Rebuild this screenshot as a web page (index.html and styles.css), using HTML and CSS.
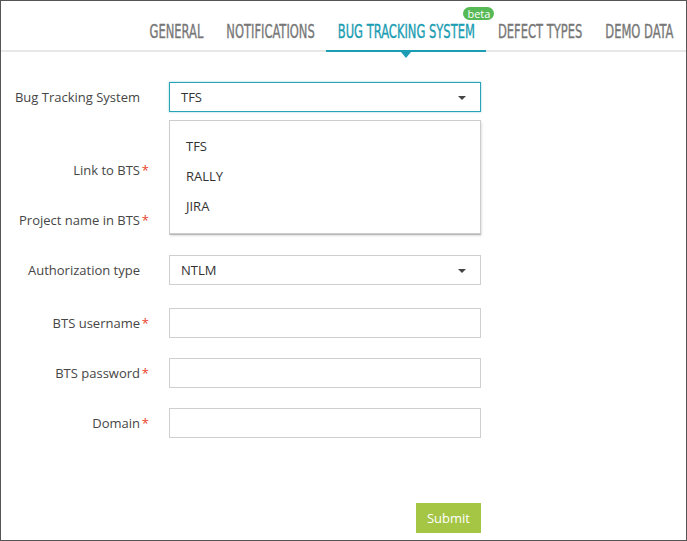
FILE: index.html
```html
<!DOCTYPE html>
<html>
<head>
<meta charset="utf-8">
<link rel="stylesheet" href="styles.css">
</head>
<body>
<div class="frame">
  <nav class="tabs">
    <a class="tab"><span class="tab-text">GENERAL</span></a>
    <a class="tab"><span class="tab-text">NOTIFICATIONS</span></a>
    <a class="tab active"><span class="tab-text">BUG TRACKING SYSTEM</span><span class="badge">beta</span></a>
    <a class="tab"><span class="tab-text">DEFECT TYPES</span></a>
    <a class="tab"><span class="tab-text">DEMO DATA</span></a>
  </nav>

  <form class="form">
    <div class="row first">
      <label class="label">Bug Tracking System<span class="star"></span></label>
      <div class="field">
        <div class="select focused"><span>TFS</span><i class="caret"></i></div>
        <ul class="menu">
          <li>TFS</li>
          <li>RALLY</li>
          <li>JIRA</li>
        </ul>
      </div>
    </div>
    <div class="row second">
      <label class="label">Link to BTS<span class="star">*</span></label>
      <div class="field"><div class="input"></div></div>
    </div>
    <div class="row">
      <label class="label">Project name in BTS<span class="star">*</span></label>
      <div class="field"><div class="input"></div></div>
    </div>
    <div class="row">
      <label class="label">Authorization type<span class="star"></span></label>
      <div class="field"><div class="select"><span>NTLM</span><i class="caret"></i></div></div>
    </div>
    <div class="row fifth">
      <label class="label">BTS username<span class="star">*</span></label>
      <div class="field"><div class="input"></div></div>
    </div>
    <div class="row">
      <label class="label">BTS password<span class="star">*</span></label>
      <div class="field"><div class="input"></div></div>
    </div>
    <div class="row">
      <label class="label">Domain<span class="star">*</span></label>
      <div class="field"><div class="input"></div></div>
    </div>
    <div class="actions">
      <button type="button" class="submit">Submit</button>
    </div>
  </form>
</div>
</body>
</html>
```

FILE: styles.css
```css
* { box-sizing: border-box; }
html, body { margin: 0; padding: 0; background: #fff; }
body { font-family: "Open Sans", "Liberation Sans", sans-serif; font-size: 13px; color: #444; }

.frame {
  width: 687px;
  height: 541px;
  border: 1px solid #555;
  overflow: hidden;
}

.tabs {
  display: flex;
  justify-content: flex-end;
  height: 51px;
  border-bottom: 2px solid #e8e8e8;
  padding-right: 1px;
}
.tab {
  position: relative;
  display: flex;
  align-items: flex-end;
  padding: 0 11.5px 7px;
  margin-bottom: -2px;
  border-bottom: 2px solid transparent;
  color: #777;
  font-family: "Liberation Sans Narrow", "DejaVu Sans Condensed", "Liberation Sans", sans-serif;
  font-size: 12.8px;
  line-height: 14px;
  -webkit-text-stroke: 0.25px currentColor;
}
.tab-text {
  display: inline-block;
  transform: scaleY(1.55);
  transform-origin: 50% 100%;
  white-space: nowrap;
}
.tab.active { color: #1b9db3; border-bottom-color: #1b9db3; }
.tab.active::after {
  content: "";
  position: absolute;
  left: 50%;
  bottom: -8px;
  margin-left: -5px;
  border-left: 5px solid transparent;
  border-right: 5px solid transparent;
  border-top: 6px solid #1b9db3;
}
.badge {
  position: absolute;
  top: 6px;
  right: -8px;
  height: 13px;
  padding: 0 4px;
  border-radius: 7px;
  background: #56b955;
  color: #fff;
  font-family: "Open Sans", sans-serif;
  font-size: 11px;
  line-height: 13px;
  -webkit-text-stroke: 0;
}

.form { padding: 0; margin: 0; }
.row {
  display: grid;
  grid-template-columns: 148px 312px;
  column-gap: 20px;
  align-items: center;
  height: 30px;
  margin-top: 20px;
}
.row.first { margin-top: 30px; }
.row.second { margin-top: 43px; }
.row.fifth { margin-top: 23px; }

.label {
  display: flex;
  justify-content: flex-end;
  white-space: nowrap;
  color: #464646;
}
.star { display: inline-block; width: 9px; text-align: right; color: #e8432c; }

.field { position: relative; height: 30px; }
.input, .select {
  height: 30px;
  border: 1px solid #cfcfcf;
  background: #fff;
}
.select {
  display: flex;
  align-items: center;
  justify-content: space-between;
  padding: 0 14px 0 11px;
  color: #333;
}
.select.focused {
  border-color: #2aa3b6;
  box-shadow: 0 0 2px rgba(42, 163, 182, 0.5);
}
.caret {
  width: 0; height: 0;
  border-left: 4px solid transparent;
  border-right: 4px solid transparent;
  border-top: 4px solid #444;
  margin-top: 2px;
}

.menu {
  position: absolute;
  z-index: 2;
  top: 38px;
  left: 0;
  width: 312px;
  margin: 0;
  padding: 10px 0 12px;
  list-style: none;
  background: #fff;
  border: 1px solid #cdcdcd;
  box-shadow: 1px 2px 2px rgba(0,0,0,0.12);
}
.menu li {
  height: 30px;
  line-height: 30px;
  padding-left: 16px;
  color: #333;
}

.actions {
  display: grid;
  grid-template-columns: 148px 312px;
  column-gap: 20px;
  margin-top: 65px;
}
.submit {
  grid-column: 2;
  justify-self: end;
  width: 65px;
  height: 30px;
  border: 0;
  background: #a5c544;
  color: #fff;
  font-family: "Open Sans", sans-serif;
  font-size: 13px;
  padding: 0;
}
```
